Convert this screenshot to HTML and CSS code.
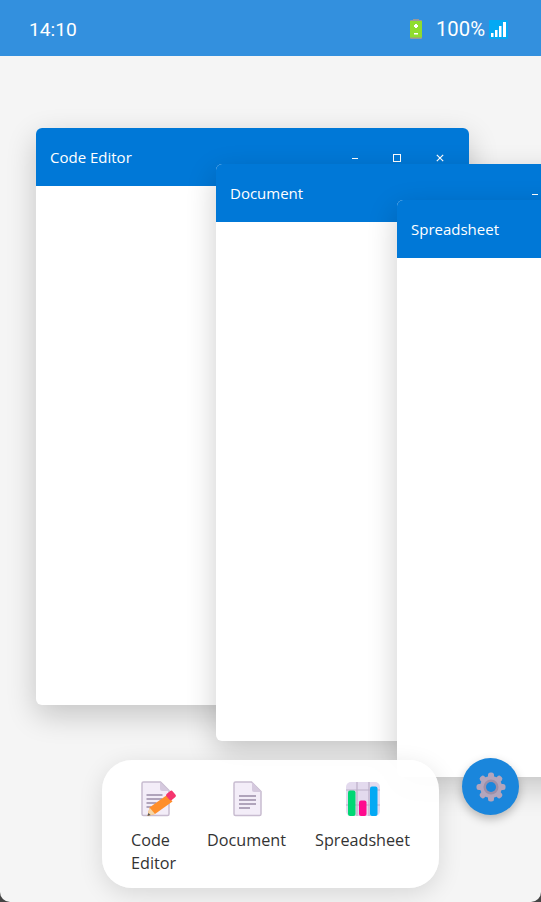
FILE: index.html
```html
<!DOCTYPE html>
<html lang="en">
<head>
    <meta charset="UTF-8">
    <meta name="viewport" content="width=device-width, initial-scale=1.0">
    <title>Desktop</title>
    <link rel="stylesheet" href="styles.css">
</head>
<body>
    <div id="screen">
        <!-- status bar -->
        <div class="statusbar">
            <span class="time">14:10</span>
            <div class="status-right">
                <svg class="battery" width="16" height="20" viewBox="0 0 16 20">
                    <rect x="5" y="0" width="6" height="2" fill="#999"/>
                    <rect x="2" y="1" width="12" height="19" rx="1" fill="#999"/>
                    <rect x="2" y="2" width="12" height="16.5" fill="#8fdc2e"/>
                    <rect x="7" y="5" width="2" height="4" fill="#fff"/>
                    <rect x="6" y="6" width="4" height="2" fill="#fff"/>
                    <rect x="6" y="14" width="4" height="1.5" fill="#fff"/>
                </svg>
                <span class="percent">100%</span>
                <svg class="signal" width="19" height="19" viewBox="0 0 19 19">
                    <rect width="19" height="19" rx="1" fill="#03a9f4"/>
                    <rect x="2" y="13" width="2.5" height="4" fill="#fff"/>
                    <rect x="6" y="10" width="2.5" height="7" fill="#fff"/>
                    <rect x="10" y="6" width="2.5" height="11" fill="#fff"/>
                    <rect x="14" y="2" width="3" height="15" fill="#fff"/>
                </svg>
            </div>
        </div>

        <!-- windows -->
        <div class="window win-code">
            <div class="titlebar">
                <span class="title">Code Editor</span>
                <div class="controls">
                    <span class="ctl ctl-min"></span>
                    <span class="ctl ctl-max"></span>
                    <svg class="ctl-close" width="8" height="8" viewBox="0 0 8 8"><path d="M.8.8l6.4 6.4M7.2.8L.8 7.2" stroke="#fff" stroke-width="1.2"/></svg>
                </div>
            </div>
        </div>
        <div class="window win-doc">
            <div class="titlebar">
                <span class="title">Document</span>
                <div class="controls">
                    <span class="ctl ctl-min"></span>
                    <span class="ctl ctl-max"></span>
                    <svg class="ctl-close" width="8" height="8" viewBox="0 0 8 8"><path d="M.8.8l6.4 6.4M7.2.8L.8 7.2" stroke="#fff" stroke-width="1.2"/></svg>
                </div>
            </div>
        </div>
        <div class="window win-sheet">
            <div class="titlebar">
                <span class="title">Spreadsheet</span>
            </div>
        </div>

        <!-- dock -->
        <div class="dock">
            <div class="app app-code">
                <svg width="36" height="36" viewBox="0 0 36 36">
                    <path d="M3.500 1h17L29 9.500V33a1.500 1.500 0 0 1-1.500 1.500h-24A1.500 1.500 0 0 1 2 33V2.500A1.500 1.500 0 0 1 3.500 1z" fill="#f3edf8" stroke="#c8bcd0" stroke-width="1.500"/>
                    <path d="M20 1v7a2 2 0 0 0 2 2h7z" fill="#d5c9de"/>
                    <path d="M6.500 14h16M6.500 18h16M6.500 22h10M6.500 26h5" stroke="#9a8ca6" stroke-width="1.300"/>
                    <path d="M9.500 26.500l17.500-12.500 5.500 6.500-17.500 12.500-7.500 2z" fill="#ff8f2b"/>
                    <path d="M7.500 35l2-8.500 5.500 6.500z" fill="#f5d6a8"/>
                    <path d="M7.500 35l.8-3 2.400 2z" fill="#555"/>
                    <rect x="27" y="10.500" width="8" height="8" rx="2" transform="rotate(-40 31 14.500)" fill="#f5356e"/>
                </svg>
                <span class="app-name">Code Editor</span>
            </div>
            <div class="app app-doc">
                <svg width="36" height="36" viewBox="0 0 36 36">
                    <path d="M6.500 1h16L32 10.500V33a1.500 1.500 0 0 1-1.500 1.500h-24A1.500 1.500 0 0 1 5 33V2.500A1.500 1.500 0 0 1 6.500 1z" fill="#f3edf8" stroke="#c8bcd0" stroke-width="1.500"/>
                    <path d="M23 1v8a2 2 0 0 0 2 2h7z" fill="#d5c9de"/>
                    <path d="M10 15h17M10 19h17M10 23h17M10 27h11" stroke="#9a8ca6" stroke-width="1.300"/>
                </svg>
                <span class="app-name">Document</span>
            </div>
            <div class="app app-sheet">
                <svg width="36" height="36" viewBox="0 0 36 36">
                    <rect x="1" y="1" width="34" height="34" rx="5" fill="#e3daee"/>
                    <path d="M12 1v34M24 1v34M1 9h34M1 24h34" stroke="#bcafc8" stroke-width="1.200"/>
                    <rect x="3" y="9.500" width="7.500" height="25.500" rx="2" fill="#00d774"/>
                    <rect x="14" y="19.500" width="7.500" height="15.500" rx="2" fill="#ff0a8e"/>
                    <rect x="25" y="5.500" width="7.500" height="29.500" rx="2" fill="#03a9f4"/>
                </svg>
                <span class="app-name">Spreadsheet</span>
            </div>
        </div>

        <!-- settings -->
        <div class="fab">
            <svg width="30" height="30" viewBox="0 0 30 30">
                <g fill="#b3a5bc">
                    <circle cx="15" cy="15" r="11"/>
                    <rect x="12" y="0.500" width="6" height="29" rx="2.500"/>
                    <rect x="12" y="0.500" width="6" height="29" rx="2.500" transform="rotate(45 15 15)"/>
                    <rect x="12" y="0.500" width="6" height="29" rx="2.500" transform="rotate(90 15 15)"/>
                    <rect x="12" y="0.500" width="6" height="29" rx="2.500" transform="rotate(135 15 15)"/>
                </g>
                <circle cx="15" cy="15" r="7.500" fill="#9d8fa8"/>
                <circle cx="15" cy="15" r="5" fill="#1a86dc"/>
            </svg>
        </div>
    </div>
</body>
</html>
```

FILE: styles.css
```css
* {
    box-sizing: border-box;
}

html, body {
    margin: 0;
    padding: 0;
}

body {
    font-family: "Open Sans", "Noto Sans", sans-serif;
    background-color: #444;
}

#screen {
    position: relative;
    width: 541px;
    height: 902px;
    overflow: hidden;
    background-color: #f5f5f5;
    border-radius: 0 0 10px 10px;
}

.statusbar {
    display: flex;
    align-items: center;
    justify-content: space-between;
    height: 56px;
    padding: 2px 33px 0 29px;
    background-color: #3390de;
    color: #fff;
    font-family: "Roboto", sans-serif;
    font-size: 19.2px;
}

.status-right {
    display: flex;
    align-items: center;
}

.battery {
    margin-right: 12px;
}

.percent {
    margin-right: 4px;
    font-size: 20.3px;
}

.window {
    position: absolute;
    background-color: #fff;
    border-radius: 6px;
    box-shadow: 0 10px 30px rgba(0, 0, 0, 0.2);
    overflow: hidden;
}

.win-code {
    left: 36px;
    top: 128px;
    width: 433px;
    height: 577px;
}

.win-doc {
    left: 216px;
    top: 164px;
    width: 433px;
    height: 577px;
}

.win-sheet {
    left: 397px;
    top: 200px;
    width: 433px;
    height: 577px;
}

.titlebar {
    display: flex;
    align-items: center;
    justify-content: space-between;
    height: 58px;
    padding: 0 25px 0 14px;
    background-color: #0078d7;
    color: #fff;
    font-size: 15px;
}

.controls {
    display: flex;
    align-items: center;
    gap: 35px;
    padding-top: 2px;
}

.ctl-min {
    width: 6px;
    height: 1px;
    margin-left: -2px;
    background-color: #fff;
}

.ctl-max {
    width: 8px;
    height: 8px;
    border: 1px solid #fff;
}

.dock {
    position: absolute;
    left: 102px;
    top: 760px;
    display: flex;
    width: 337px;
    height: 128px;
    padding: 21px 0 0 24px;
    background-color: rgba(255, 255, 255, 0.95);
    border-radius: 30px;
    box-shadow: 0 6px 24px rgba(0, 0, 0, 0.12);
}

.app {
    display: flex;
    flex-direction: column;
    align-items: center;
    color: #333;
    font-size: 16.2px;
    line-height: 23px;
}

.app svg {
    margin-bottom: 12px;
}

.app-code {
    width: 58px;
}

.app-code svg {
    margin-left: 5px;
}

.app-code .app-name {
    width: 48px;
}

.app-doc {
    width: 79px;
    margin-left: 23px;
}

.app-sheet {
    width: 95px;
    margin-left: 29px;
}

.fab {
    position: absolute;
    left: 462px;
    top: 758px;
    display: flex;
    align-items: center;
    justify-content: center;
    width: 57px;
    height: 57px;
    border-radius: 50%;
    background-color: #1a86dc;
    box-shadow: 0 4px 10px rgba(0, 0, 0, 0.25);
}
```
